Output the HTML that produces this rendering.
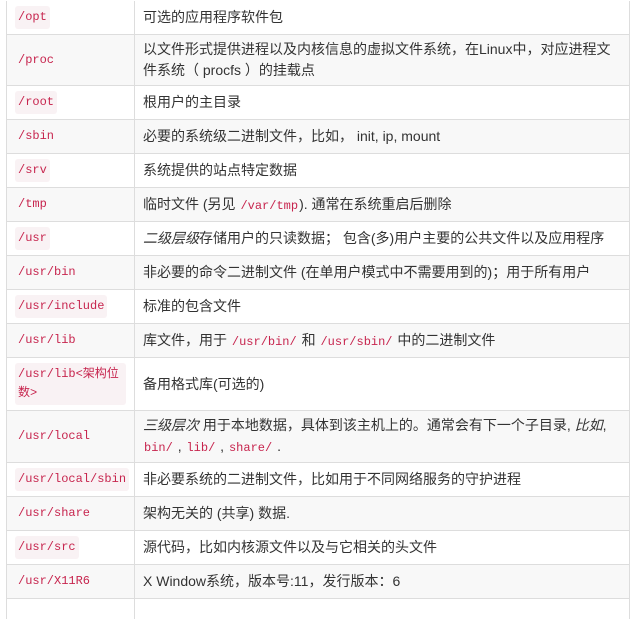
<!DOCTYPE html>
<html><head><meta charset="utf-8"><style>
body{margin:0;background:#fff;width:638px;height:603px;overflow:hidden;font-family:"Liberation Sans","Noto Sans CJK SC",sans-serif;font-size:14px;color:#333}
.t{position:absolute;left:6px;top:1px;width:622px;border-left:1px solid #ddd;border-right:1px solid #ddd}
.r{display:flex;border-bottom:1px solid #ddd;box-sizing:border-box}
.r:nth-child(even){background:#f8f8f8}
.a{width:128px;box-sizing:border-box;border-right:1px solid #ddd;padding:0 8px;display:flex;align-items:center}
.b{flex:1;padding:0 8px;display:flex;align-items:center;line-height:21px}
code{font-family:"Liberation Mono","Noto Sans CJK SC",monospace;font-size:12px;color:#c7254e;background:#f9f2f4;padding:2px 3px;border-radius:3px;line-height:19px}
.r:nth-child(even) code{background:transparent}
.b code{background:transparent;padding:0 1px}
i{font-style:italic}
</style></head><body>
<div class="t">
<div class="r" style="height:34px"><div class="a"><code>/opt</code></div><div class="b">可选的应用程序软件包</div></div>
<div class="r" style="height:51px"><div class="a"><code>/proc</code></div><div class="b">以文件形式提供进程以及内核信息的虚拟文件系统，在Linux中，对应进程文件系统（ procfs ）的挂载点</div></div>
<div class="r" style="height:34px"><div class="a"><code>/root</code></div><div class="b">根用户的主目录</div></div>
<div class="r" style="height:34px"><div class="a"><code>/sbin</code></div><div class="b">必要的系统级二进制文件，比如， init, ip, mount</div></div>
<div class="r" style="height:34px"><div class="a"><code>/srv</code></div><div class="b">系统提供的站点特定数据</div></div>
<div class="r" style="height:34px"><div class="a"><code>/tmp</code></div><div class="b"><span>临时文件 (另见 <code>/var/tmp</code>). 通常在系统重启后删除</span></div></div>
<div class="r" style="height:34px"><div class="a"><code>/usr</code></div><div class="b"><span><i>二级层级</i>存储用户的只读数据； 包含(多)用户主要的公共文件以及应用程序</span></div></div>
<div class="r" style="height:34px"><div class="a"><code>/usr/bin</code></div><div class="b">非必要的命令二进制文件 (在单用户模式中不需要用到的)；用于所有用户</div></div>
<div class="r" style="height:34px"><div class="a"><code>/usr/include</code></div><div class="b">标准的包含文件</div></div>
<div class="r" style="height:34px"><div class="a"><code>/usr/lib</code></div><div class="b"><span>库文件，用于 <code>/usr/bin/</code> 和 <code>/usr/sbin/</code> 中的二进制文件</span></div></div>
<div class="r" style="height:53px"><div class="a"><code>/usr/lib&lt;架构位数&gt;</code></div><div class="b">备用格式库(可选的)</div></div>
<div class="r" style="height:52px"><div class="a"><code>/usr/local</code></div><div class="b"><span><i>三级层次</i> 用于本地数据，具体到该主机上的。通常会有下一个子目录, <i>比如</i>, <code>bin/</code> , <code>lib/</code> , <code>share/</code> .</span></div></div>
<div class="r" style="height:34px"><div class="a"><code>/usr/local/sbin</code></div><div class="b">非必要系统的二进制文件，比如用于不同网络服务的守护进程</div></div>
<div class="r" style="height:34px"><div class="a"><code>/usr/share</code></div><div class="b">架构无关的 (共享) 数据.</div></div>
<div class="r" style="height:34px"><div class="a"><code>/usr/src</code></div><div class="b">源代码，比如内核源文件以及与它相关的头文件</div></div>
<div class="r" style="height:34px"><div class="a"><code>/usr/X11R6</code></div><div class="b">X Window系统，版本号:11，发行版本：6</div></div>
<div class="r" style="height:20px;border-bottom:none;background:#fff"><div class="a"></div><div class="b"></div></div>
</div>
</body></html>
